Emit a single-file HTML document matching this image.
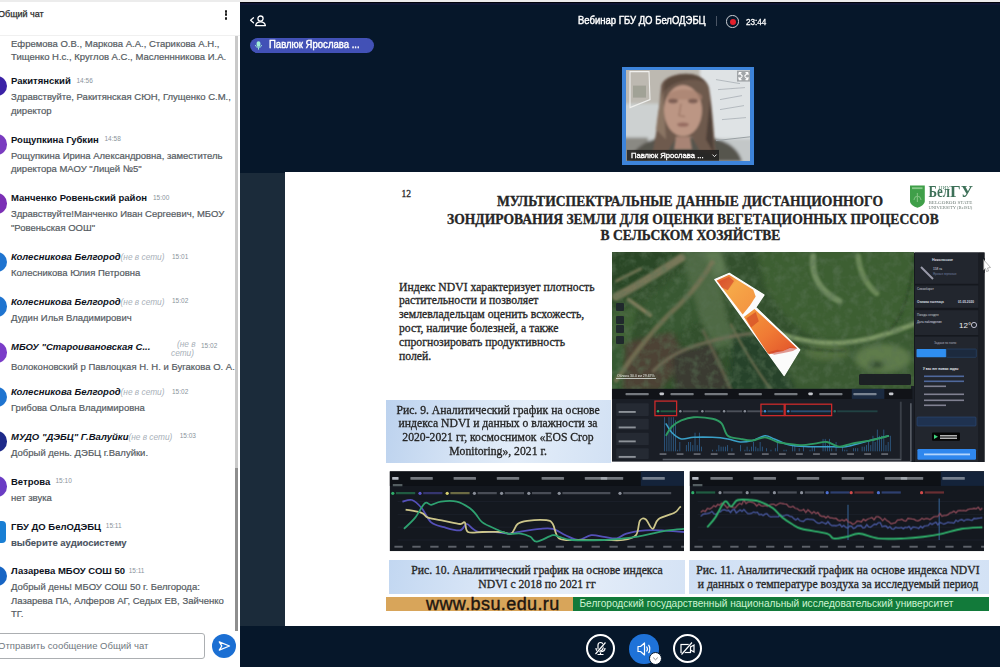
<!DOCTYPE html>
<html><head><meta charset="utf-8">
<style>
*{margin:0;padding:0;box-sizing:border-box}
html,body{width:1000px;height:667px;overflow:hidden;background:#06172a;font-family:"Liberation Sans",sans-serif;position:relative}
.a{position:absolute;white-space:nowrap}
#topbar{position:absolute;left:0;top:0;width:1000px;height:1.6px;background:#ececec}
#topline{position:absolute;left:240px;top:1.6px;width:760px;height:1.4px;background:#03040c}
#topline2{position:absolute;left:240px;top:3px;width:760px;height:2.4px;background:#0f1735}
#chat{position:absolute;left:0;top:2px;width:240px;height:665px;background:#fff}
.hdr{left:-2px;top:9px;font-size:9px;line-height:10px;color:#2b2b2b;-webkit-text-stroke:0.25px #2b2b2b}
.dots{left:224.5px;top:10px;width:2.8px}
.dots i{display:block;width:2.8px;height:2.8px;border-radius:50%;background:#1a1a1a;margin-bottom:0.7px}
.sep{left:0;top:35px;width:240px;height:1px;background:#f0f0f0}
.sb-track{left:235px;top:36px;width:3px;height:432px;background:#c9c9c9}
.sb-thumb{left:235px;top:468px;width:3px;height:163px;background:#8e8e8e}
.n{font-size:9.5px;line-height:11px;font-weight:bold;color:#0d121c;left:11px}
.n.i{font-style:italic}
.off{font-weight:normal;font-style:italic;color:#a9b1b9;font-size:8.3px;line-height:10px}
.t{font-size:6.5px;line-height:8px;color:#8a939c}
.m{font-size:9.5px;line-height:11px;color:#555b62;left:11px;-webkit-text-stroke:0.2px #555b62}
.m.b{font-weight:bold;color:#4a5360;-webkit-text-stroke:0.1px #4a5360}
.av{left:-14px;width:20.5px;height:20.5px;border-radius:50%}
.avs{left:-16px;width:22px;height:22px;border-radius:4px}
.inp{left:-4px;top:633px;width:209px;height:26px;border:1.4px solid #acafb2;border-radius:3px;background:#fff}
.ph{left:-2px;top:640px;font-size:9.5px;line-height:11px;color:#6f7780}
.send{left:212px;top:634px;width:24px;height:24px;border-radius:50%;background:#1b6fd3}
.ser{-webkit-text-stroke:0.3px #262626}
#main{position:absolute;left:240px;top:2px;width:760px;height:665px;background:#06172a}
</style></head><body>
<div id="topbar"></div>
<div id="chat"></div>
<div class="a hdr">Общий чат</div>
<div class="a dots"><i></i><i></i><i></i></div>
<div class="a sep"></div>
<div class="a sb-track"></div>
<div class="a sb-thumb"></div>
<div class="a m" style="top:38.1px">Ефремова О.В., Маркова А.А., Старикова А.Н.,</div>
<div class="a m" style="top:51.4px">Тищенко Н.с., Круглов А.С., Масленнникова И.А.</div>
<div class="a n" style="top:75.1px">Ракитянский</div>
<div class="a t" style="left:76.5px;top:76.7px">14:56</div>
<div class="a av" style="top:75.8px;background:#3b22a6"></div>
<div class="a m" style="top:91.1px">Здравствуйте, Ракитянская СЮН, Глущенко С.М.,</div>
<div class="a m" style="top:104.6px">директор</div>
<div class="a n" style="top:133.7px">Рощупкина Губкин</div>
<div class="a t" style="left:104.5px;top:135.3px">14:58</div>
<div class="a av" style="top:134.4px;background:#7a3cc0"></div>
<div class="a m" style="top:149.7px">Рощупкина Ирина Александровна, заместитель</div>
<div class="a m" style="top:163.2px">директора МАОУ "Лицей №5"</div>
<div class="a n" style="top:192.3px">Манченко Ровеньский район</div>
<div class="a t" style="left:153px;top:193.9px">15:00</div>
<div class="a av" style="top:193.0px;background:#7b2fb5"></div>
<div class="a m" style="top:208.3px">Здравствуйте!Манченко Иван Сергеевич, МБОУ</div>
<div class="a m" style="top:221.8px">"Ровеньская ООШ"</div>
<div class="a n i" style="top:250.9px">Колесникова Белгород<span class="off">(не в сети)</span></div>
<div class="a t" style="left:172px;top:252.5px">15:01</div>
<div class="a av" style="top:251.6px;background:#1f74d0"></div>
<div class="a m" style="top:266.9px">Колесникова Юлия Петровна</div>
<div class="a n i" style="top:295.5px">Колесникова Белгород<span class="off">(не в сети)</span></div>
<div class="a t" style="left:172px;top:297.1px">15:02</div>
<div class="a av" style="top:296.2px;background:#1f74d0"></div>
<div class="a m" style="top:311.5px">Дудин Илья Владимирович</div>
<div class="a n i" style="top:341.4px">МБОУ "Староивановская С...</div>
<div class="a off" style="left:177px;top:338.9px">(не в</div>
<div class="a off" style="left:171px;top:347.9px">сети)</div>
<div class="a t" style="left:201px;top:342.0px">15:02</div>
<div class="a av" style="top:342.1px;background:#7a3cc8"></div>
<div class="a m" style="top:361.2px">Волоконовский р Павлоцкая Н. Н. и Бугакова О. А.</div>
<div class="a n i" style="top:386.1px">Колесникова Белгород<span class="off">(не в сети)</span></div>
<div class="a t" style="left:172px;top:387.7px">15:02</div>
<div class="a av" style="top:386.8px;background:#1f74d0"></div>
<div class="a m" style="top:402.1px">Грибова Ольга Владимировна</div>
<div class="a n i" style="top:430.6px">МУДО "ДЭБЦ" Г.Валуйки<span class="off">(не в сети)</span></div>
<div class="a t" style="left:179.7px;top:432.2px">15:03</div>
<div class="a av" style="top:431.3px;background:#1e2a8a"></div>
<div class="a m" style="top:446.6px">Добрый день. ДЭБЦ г.Валуйки.</div>
<div class="a n" style="top:475.7px">Ветрова</div>
<div class="a t" style="left:55.5px;top:477.3px">15:10</div>
<div class="a av" style="top:476.4px;background:#6a3cc4"></div>
<div class="a m" style="top:491.7px">нет звука</div>
<div class="a n" style="top:520.8px">ГБУ ДО БелОДЭБЦ</div>
<div class="a t" style="left:105.8px;top:522.4px">15:11</div>
<div class="a avs" style="top:520.5px;background:#1a7fd4"></div>
<div class="a m b" style="top:536.8px">выберите аудиосистему</div>
<div class="a n" style="top:565.1px">Лазарева МБОУ СОШ 50</div>
<div class="a t" style="left:128.7px;top:566.7px">15:11</div>
<div class="a av" style="top:565.8px;background:#1765c4"></div>
<div class="a m" style="top:581.1px">Добрый день! МБОУ СОШ 50 г. Белгорода:</div>
<div class="a m" style="top:594.6px">Лазарева ПА, Алферов АГ, Седых ЕВ, Зайченко</div>
<div class="a m" style="top:608.1px">ТГ.</div>
<div class="a inp"></div>
<div class="a ph">Отправить сообщение Общий чат</div>
<div class="a send"><svg width="24" height="24" viewBox="0 0 24 24"><path d="M7.3 7.9 L17.5 12 L7.3 16.1 L9.8 12 Z" fill="none" stroke="#fff" stroke-width="1.3" stroke-linejoin="round"/></svg></div>
<div id="main"></div>
<div id="topline"></div><div id="topline2"></div>
<!-- header -->
<svg class="a" style="left:248px;top:13px" width="20" height="16" viewBox="0 0 20 16">
 <path d="M5.5 4.8 L2.6 7.3 L5.5 9.8" fill="none" stroke="#fff" stroke-width="1.3" stroke-linecap="round" stroke-linejoin="round"/>
 <circle cx="12.5" cy="5.6" r="2.6" fill="none" stroke="#fff" stroke-width="1.3"/>
 <path d="M7.6 12.6 C8.2 9.9 10.2 8.9 12.5 8.9 C14.8 8.9 16.8 9.9 17.4 12.6 Z" fill="none" stroke="#fff" stroke-width="1.3" stroke-linejoin="round"/>
</svg>
<div class="a" style="left:577.5px;top:14.2px;font-size:11px;line-height:13px;color:#fff;-webkit-text-stroke:0.45px #fff;transform:scaleX(0.865);transform-origin:0 0">Вебинар ГБУ ДО БелОДЭБЦ</div>
<div class="a" style="left:715.5px;top:16px;width:1px;height:10px;background:#4a5565"></div>
<div class="a" style="left:726.3px;top:15.3px;width:12.4px;height:12.4px;border-radius:50%;border:1.2px solid #c9cdd3;background:#06172a"></div>
<div class="a" style="left:729.5px;top:18.5px;width:6px;height:6px;border-radius:50%;background:#e3202c"></div>
<div class="a" style="left:746px;top:15.8px;font-size:9.4px;line-height:11px;color:#fff;-webkit-text-stroke:0.3px #fff;transform:scaleX(0.87);transform-origin:0 0">23:44</div>
<!-- talking pill -->
<div class="a" style="left:250px;top:38px;width:124px;height:15px;border-radius:8px;background:#4251b6"></div>
<svg class="a" style="left:254px;top:40px" width="9" height="11" viewBox="0 0 9 11">
 <rect x="2.6" y="1.2" width="3.8" height="5.6" rx="1.9" fill="#9ff0d6"/>
 <path d="M1.4 5.2 C1.4 8 7.6 8 7.6 5.2" fill="none" stroke="#9ff0d6" stroke-width="1"/>
 <rect x="4" y="7.6" width="1" height="2" fill="#9ff0d6"/>
</svg>
<div class="a" style="left:268.5px;top:39.2px;font-size:10px;line-height:12px;color:#fff;-webkit-text-stroke:0.4px #fff;transform:scaleX(0.955);transform-origin:0 0">Павлюк Ярослава ...</div>
<div class="a" style="left:621.8px;top:66.6px;width:132px;height:98.6px;background:#3d84da"></div>
<svg class="a" style="left:626px;top:70.4px" width="124.3" height="90.6" viewBox="626 70.4 124.3 90.6">
 <defs><filter id="vb" x="-10%" y="-10%" width="120%" height="120%"><feGaussianBlur stdDeviation="1.5"/></filter>
 <filter id="vb1" x="-20%" y="-20%" width="140%" height="140%"><feGaussianBlur stdDeviation="0.9"/></filter>
 <filter id="vb2"><feGaussianBlur stdDeviation="0.45"/></filter></defs>
 <rect x="626" y="70.4" width="124.3" height="90.6" fill="#c9c9c6"/>
 <g filter="url(#vb)">
  <rect x="620" y="65" width="90" height="42" fill="#bdb9b1"/>
  <rect x="620" y="104" width="52" height="60" fill="#cdd1d1"/>
  <rect x="700" y="65" width="55" height="76" fill="#dfe3e5"/>
  <rect x="700" y="139" width="55" height="25" fill="#c3c7c8"/>
  <rect x="620" y="138" width="28" height="25" fill="#8a8983"/>
  <path d="M630 162 C634 145 652 139 668 137 L702 137 C724 139 738 147 742 162 Z" fill="#57544e"/>
 </g>
 <g filter="url(#vb1)">
  <path d="M661 88 C661 72 704 68 709 88 C713 112 714 138 716 156 L700 152 L692 138 L676 138 L668 152 L652 156 C656 138 659 112 661 88 Z" fill="#6e5a4d"/>
  <path d="M664 84 C670 72 700 70 706 84 C700 78 676 78 664 92 Z" fill="#5a483e"/>
  <path d="M656 130 C658 112 660 100 663 92 L666 140 Z" fill="#8a7464"/>
  <path d="M710 100 C712 120 713 140 714 154 L706 140 Z" fill="#4e3f37"/>
  <ellipse cx="683" cy="111" rx="19" ry="25.5" fill="#bc9684"/>
  <path d="M668 95 C676 88 694 88 702 96 L702 100 L668 100 Z" fill="#a88270" opacity="0.7"/>
  <ellipse cx="673" cy="101.5" rx="5" ry="2.4" fill="#6e5048" opacity="0.8"/>
  <ellipse cx="693" cy="101.5" rx="5" ry="2.4" fill="#6e5048" opacity="0.8"/>
  <path d="M681 104 L679 116 L685 117" stroke="#9a7464" stroke-width="1.2" fill="none"/>
  <ellipse cx="683" cy="125" rx="6" ry="2.2" fill="#8a5e56" opacity="0.75"/>
  <path d="M676 137 L690 137 L692 150 L674 150 Z" fill="#a88474"/>
 </g>
 <g filter="url(#vb2)">
  <path d="M630 72 L649 72 L650 100 L630 108 Z" fill="none" stroke="#f0f0ee" stroke-width="1.1"/>
  <rect x="633" y="86" width="13" height="12" fill="#8a8e80" opacity="0.55"/>
  <path d="M716 80 L740 84 M718 90 L745 88 M720 100 L742 96 M720 110 L744 106 M722 120 L746 118" stroke="#5a6470" stroke-width="0.6" opacity="0.55"/>
  <path d="M716 141 L752 137" stroke="#9aa0a4" stroke-width="1"/>
 </g>
 <rect x="737" y="71" width="13" height="11" fill="#8e9294" opacity="0.75"/>
 <path d="M739 73 L742.5 76.5 M739 73 H741.5 M739 73 V75.5 M748 73 L744.5 76.5 M748 73 H745.5 M748 73 V75.5 M739 80 L742.5 76.5 M739 80 H741.5 M739 80 V77.5 M748 80 L744.5 76.5 M748 80 H745.5 M748 80 V77.5" stroke="#fff" stroke-width="1.1"/>
 <rect x="627" y="150.3" width="92" height="10.8" fill="#1d1d1d" opacity="0.82"/>
 <path d="M712.5 155 L714.5 157 L716.5 155" stroke="#fff" stroke-width="0.9" fill="none"/>
</svg>
<div class="a" style="left:631px;top:150.6px;font-size:8px;line-height:10px;color:#fff;-webkit-text-stroke:0.35px #fff;transform:scaleX(0.955);transform-origin:0 0">Павлюк Ярослава ...</div>

<!-- presentation band -->
<div class="a" style="left:240px;top:173px;width:45px;height:453px;background:#1b2b3a"></div>
<div class="a" style="left:285px;top:172px;width:715px;height:454px;background:#fff"></div>
<svg class="a" style="left:0;top:0" width="1000" height="667" viewBox="0 0 1000 667">
<defs>
<filter id="bl1" x="-20%" y="-20%" width="140%" height="140%"><feGaussianBlur stdDeviation="1.2"/></filter>
<filter id="bl2" x="-20%" y="-20%" width="140%" height="140%"><feGaussianBlur stdDeviation="2.5"/></filter>
<filter id="blz" x="-20%" y="-20%" width="140%" height="140%"><feGaussianBlur stdDeviation="9"/></filter>
<filter id="blz2" x="-20%" y="-20%" width="140%" height="140%"><feGaussianBlur stdDeviation="4"/></filter>
<filter id="noise" x="0" y="0" width="100%" height="100%"><feTurbulence type="fractalNoise" baseFrequency="0.12" numOctaves="3" seed="4"/><feColorMatrix type="matrix" values="0 0 0 0 0.1  0 0 0 0 0.17  0 0 0 0 0.09  0 0 0 2.2 -0.9"/></filter>
<filter id="bl05"><feGaussianBlur stdDeviation="0.5"/></filter>
<clipPath id="mapclip"><rect x="612" y="252" width="302" height="137"/></clipPath>
<clipPath id="c1clip"><rect x="389" y="471" width="296" height="81"/></clipPath>
<clipPath id="c2clip"><rect x="688" y="471" width="296" height="81"/></clipPath>
<clipPath id="c3clip"><rect x="612" y="389" width="302" height="73"/></clipPath>
<linearGradient id="fieldg" x1="0" y1="0" x2="1" y2="1">
 <stop offset="0" stop-color="#c8281c"/><stop offset="0.3" stop-color="#f0802a"/><stop offset="0.6" stop-color="#e9622a"/><stop offset="1" stop-color="#d8401f"/>
</linearGradient>
<linearGradient id="fieldg2" x1="0" y1="0" x2="1" y2="1">
 <stop offset="0" stop-color="#e25a28"/><stop offset="0.35" stop-color="#f6a848"/><stop offset="1" stop-color="#f39040"/>
</linearGradient>
<linearGradient id="fieldg3" x1="0" y1="0" x2="1" y2="1">
 <stop offset="0" stop-color="#f49a3c"/><stop offset="0.5" stop-color="#f07a34"/><stop offset="1" stop-color="#e0502a"/>
</linearGradient>
</defs>
<g clip-path="url(#mapclip)">
<rect x="612" y="252" width="302" height="137" fill="#33502d"/>
<g transform="translate(610,250) scale(0.31)">
<g filter="url(#blz)">
<path d="M470 0 H1000 V260 C900 270 800 290 700 290 C620 280 560 220 500 120 Z" fill="#3d5e33"/>
<path d="M0 0 H200 L70 150 L0 130 Z" fill="#2a4727"/>
<path d="M100 175 L245 60 L310 220 L160 300 Z" fill="#385832"/>
<path d="M230 0 L330 0 L360 120 L380 230 L420 300 L340 320 L300 240 L260 120 Z" fill="#4f6a44"/>
<path d="M300 0 L360 0 L380 80 L340 90 Z" fill="#5f7a52"/>
<path d="M40 300 L200 265 L245 350 L160 452 L40 452 Z" fill="#4d4235"/>
<path d="M210 370 L330 320 L390 452 L230 452 Z" fill="#4a493d"/>
<path d="M0 200 L90 180 L60 300 L0 320 Z" fill="#3f6236"/>
<path d="M0 320 L50 310 L40 452 L0 452 Z" fill="#365a30"/>
<path d="M580 300 L1000 260 V452 H560 Z" fill="#3a5a31"/>
<ellipse cx="880" cy="350" rx="90" ry="45" fill="#5f7c4c"/>
<ellipse cx="700" cy="330" rx="70" ry="25" fill="#53703f"/>
<ellipse cx="860" cy="370" rx="25" ry="10" fill="#26402a"/>
<path d="M400 260 L520 300 L600 452 L380 452 Z" fill="#27422a"/>
<path d="M200 330 L330 300 L390 452 L210 452 Z" fill="#3a3a30"/>
</g>
<g filter="url(#blz2)" fill="none" stroke-linecap="round">
<path d="M20 420 C60 360 140 250 230 170 C260 140 300 90 330 40" stroke="#7a7658" stroke-width="16" opacity="0.8"/>
<path d="M20 150 C80 120 160 70 230 25" stroke="#857f60" stroke-width="26" opacity="0.85"/>
<path d="M60 160 L130 210" stroke="#86805f" stroke-width="12"/>
<path d="M20 100 L100 60" stroke="#7d7a5a" stroke-width="8"/>
<path d="M140 390 C200 330 260 310 340 290 C400 275 440 270 480 268" stroke="#77715a" stroke-width="12" opacity="0.8"/>
<path d="M300 260 C330 320 360 380 390 452" stroke="#6f6a52" stroke-width="10" opacity="0.7"/>
<path d="M390 240 C420 300 460 370 520 452" stroke="#6f7052" stroke-width="7"/>
<path d="M655 20 C650 80 670 130 740 165" stroke="#7a9468" stroke-width="20" opacity="0.85"/>
<path d="M800 20 C805 70 825 110 860 140" stroke="#74905f" stroke-width="18" opacity="0.85"/>
<path d="M470 240 C540 270 620 300 720 300 C820 300 900 270 990 235" stroke="#7c9665" stroke-width="16"/>
<path d="M480 265 C560 300 640 330 760 325" stroke="#2a4426" stroke-width="5"/>
<path d="M980 20 C975 120 940 230 900 260" stroke="#2a4426" stroke-width="5"/>
</g>
</g>
<rect x="612" y="252" width="302" height="137" filter="url(#noise)" opacity="0.55"/>
<g transform="translate(610,250) scale(0.31)">
<path d="M338 95 L385 75 L497 145 L470 185 L612 322 L562 405 Z" fill="#fbfbfb" stroke="#fff" stroke-width="4" stroke-linejoin="round"/>
<path d="M344 98 L384 80 L462 128 L470 150 L452 178 L428 208 Z" fill="url(#fieldg2)"/>
<path d="M432 216 L466 190 L540 258 L604 318 L580 316 L560 326 L536 330 L514 336 L508 332 Z" fill="url(#fieldg3)"/>
<path d="M350 102 L384 86 L400 100 L380 130 L360 120 Z" fill="#d0402a" opacity="0.6"/>
<path d="M510 330 L540 322 L560 326 L580 314 L604 318 L590 326 L560 332 L530 338 Z" fill="#c8382a" opacity="0.5"/>
<path d="M440 220 L470 200 L480 230 L455 250 Z" fill="#c8321e" opacity="0.5"/>
</g>
<rect x="616" y="303" width="8" height="8" rx="1" fill="#1d232b" opacity="0.9"/>
<rect x="616" y="316" width="8" height="8" rx="1" fill="#1d232b" opacity="0.9"/>
<rect x="616" y="325" width="8" height="8" rx="1" fill="#1d232b" opacity="0.9"/>
<rect x="616" y="336" width="8" height="8" rx="1" fill="#1d232b" opacity="0.9"/>
<rect x="859" y="374" width="52" height="11" rx="1.5" fill="#1a1e24" opacity="0.95"/>
<rect x="616" y="378" width="40" height="1" fill="#dfe3e0" opacity="0.8"/>
<text x="617" y="377" font-family="Liberation Sans" font-size="3.5" fill="#e8ece8">Облака      30.0 км 29.67%</text>
</g>
<rect x="911" y="386" width="4" height="76" fill="#1a1e26"/>
<rect x="914" y="252.5" width="70.5" height="209.5" fill="#15181e"/>
<rect x="915" y="252.5" width="63.5" height="31.30000000000001" fill="#22262e"/>
<rect x="915" y="285.5" width="63.5" height="22.30000000000001" fill="#22262e"/>
<rect x="915" y="310.2" width="63.5" height="24.80000000000001" fill="#22262e"/>
<rect x="915" y="336.6" width="63.5" height="125.39999999999998" fill="#22262e"/>
<rect x="978.5" y="252.5" width="6" height="209.5" fill="#1a1d23"/>
<path d="M921 267 L933 279" stroke="#ccd" stroke-width="2" opacity="0.7"/>
<text x="932" y="261" font-family="Liberation Sans" font-size="3.6" font-weight="bold" fill="#d6dae0">Никольское</text>
<text x="933" y="270" font-family="Liberation Sans" font-size="3.2" fill="#d6dae0">158 га</text>
<text x="933" y="275" font-family="Liberation Sans" font-size="2.8" fill="#6f7fa0">Яровые зерновые</text>
<text x="917" y="290" font-family="Liberation Sans" font-size="3" fill="#c9ced6">Севооборот</text>
<text x="917" y="303" font-family="Liberation Sans" font-size="3.2" font-weight="bold" fill="#d6dae0">Озимая пшеница</text>
<text x="958" y="303" font-family="Liberation Sans" font-size="3.2" font-weight="bold" fill="#d6dae0">01.05.2020</text>
<text x="917" y="316" font-family="Liberation Sans" font-size="3" fill="#c9ced6">Погода сегодня</text>
<text x="917" y="323" font-family="Liberation Sans" font-size="3" fill="#d6dae0">Дата наблюдения</text>
<text x="959" y="328" font-family="Liberation Sans" font-size="8" fill="#eef0f3">12°</text>
<circle cx="974" cy="325" r="2.6" fill="none" stroke="#ccd" stroke-width="0.9"/>
<text x="934" y="344" font-family="Liberation Sans" font-size="3" fill="#aab">Задачи по полю</text>
<rect x="916.5" y="349" width="29.8" height="8.3" rx="0.8" fill="#2f8ef0"/>
<rect x="946.3" y="349" width="30" height="8.3" rx="0.8" fill="#1c2a3e" stroke="#2b4f7c" stroke-width="0.5"/>
<text x="923" y="370" font-family="Liberation Sans" font-size="3.2" font-weight="bold" fill="#e6e9ee">У вас нет новых задач</text>
<rect x="924" y="375.5" width="40" height="1.6" fill="#5b79b8" opacity="0.8"/>
<rect x="924" y="380.5" width="40" height="1.6" fill="#5b79b8" opacity="0.8"/>
<rect x="924" y="385.5" width="22" height="1.6" fill="#99a" opacity="0.8"/>
<rect x="924" y="393.5" width="40" height="1.6" fill="#99a" opacity="0.8"/>
<rect x="924" y="399.5" width="40" height="1.6" fill="#99a" opacity="0.8"/>
<rect x="924" y="404.5" width="22" height="1.6" fill="#99a" opacity="0.8"/>
<rect x="917" y="417" width="59" height="9" rx="1" fill="#1f3250" stroke="#2d4c78" stroke-width="0.6"/>
<rect x="932" y="432.6" width="28" height="8.2" rx="1" fill="#050505"/>
<path d="M934 434.5 L938 436.7 L934 438.9 Z" fill="#3fd67f"/>
<rect x="940" y="435" width="17" height="1.5" fill="#ddd" opacity="0.8"/><rect x="940" y="437.5" width="17" height="1.5" fill="#ddd" opacity="0.8"/>
<rect x="917.4" y="449" width="58.6" height="10.8" rx="1.2" fill="#2f87ee"/>
<rect x="924" y="453.5" width="46" height="1.8" fill="#d6e8ff" opacity="0.8"/>
<g transform="translate(380,460) scale(0.32)" clip-path="url(#c1z)">
<clipPath id="c1z"><rect x="30" y="35" width="920" height="250"/></clipPath>
<rect x="30" y="35" width="920" height="250" fill="#14181f"/>
<rect x="30" y="35" width="920" height="46" fill="#0e1116"/>
<rect x="815" y="35" width="135" height="46" fill="#14233a"/>
<rect x="38" y="53" width="20" height="9" rx="2" fill="#c9ced6" opacity="0.9"/>
<rect x="95" y="53" width="70" height="9" rx="2" fill="#c9ced6" opacity="0.55"/>
<rect x="230" y="53" width="70" height="9" rx="2" fill="#c9ced6" opacity="0.55"/>
<rect x="365" y="53" width="70" height="9" rx="2" fill="#c9ced6" opacity="0.55"/>
<rect x="505" y="53" width="70" height="9" rx="2" fill="#c9ced6" opacity="0.55"/>
<rect x="640" y="53" width="70" height="9" rx="2" fill="#c9ced6" opacity="0.55"/>
<rect x="690" y="53" width="70" height="9" rx="2" fill="#c9ced6" opacity="0.55"/>
<rect x="820" y="53" width="70" height="9" rx="2" fill="#c9ced6" opacity="0.55"/>
<rect x="40" y="75" width="30" height="7" fill="#9aa" opacity="0.5"/>
<line x1="55" y1="130" x2="950" y2="130" stroke="#1f2430" stroke-width="2"/>
<line x1="55" y1="170" x2="950" y2="170" stroke="#1f2430" stroke-width="2"/>
<line x1="55" y1="210" x2="950" y2="210" stroke="#1f2430" stroke-width="2"/>
<line x1="55" y1="250" x2="950" y2="250" stroke="#1f2430" stroke-width="2"/>
<rect x="45" y="268" width="26" height="6" fill="#b5bac4" opacity="0.45"/>
<rect x="101" y="268" width="26" height="6" fill="#b5bac4" opacity="0.45"/>
<rect x="157" y="268" width="26" height="6" fill="#b5bac4" opacity="0.45"/>
<rect x="213" y="268" width="26" height="6" fill="#b5bac4" opacity="0.45"/>
<rect x="269" y="268" width="26" height="6" fill="#b5bac4" opacity="0.45"/>
<rect x="325" y="268" width="26" height="6" fill="#b5bac4" opacity="0.45"/>
<rect x="381" y="268" width="26" height="6" fill="#b5bac4" opacity="0.45"/>
<rect x="437" y="268" width="26" height="6" fill="#b5bac4" opacity="0.45"/>
<rect x="493" y="268" width="26" height="6" fill="#b5bac4" opacity="0.45"/>
<rect x="549" y="268" width="26" height="6" fill="#b5bac4" opacity="0.45"/>
<rect x="605" y="268" width="26" height="6" fill="#b5bac4" opacity="0.45"/>
<rect x="661" y="268" width="26" height="6" fill="#b5bac4" opacity="0.45"/>
<rect x="717" y="268" width="26" height="6" fill="#b5bac4" opacity="0.45"/>
<rect x="773" y="268" width="26" height="6" fill="#b5bac4" opacity="0.45"/>
<rect x="829" y="268" width="26" height="6" fill="#b5bac4" opacity="0.45"/>
<rect x="885" y="268" width="26" height="6" fill="#b5bac4" opacity="0.45"/>
<rect x="941" y="268" width="26" height="6" fill="#b5bac4" opacity="0.45"/>
<circle cx="40" cy="104" r="5" fill="#2fae6a"/><rect x="50" y="100" width="60" height="7" fill="#2fae6a" opacity="0.45"/>
<circle cx="125" cy="104" r="5" fill="#5d58d0"/><rect x="135" y="100" width="60" height="7" fill="#5d58d0" opacity="0.45"/>
<circle cx="210" cy="104" r="5" fill="#d8d070"/><rect x="220" y="100" width="60" height="7" fill="#d8d070" opacity="0.45"/>
<circle cx="295" cy="104" r="5" fill="#8a8f99"/><rect x="305" y="100" width="60" height="7" fill="#8a8f99" opacity="0.45"/>
<circle cx="380" cy="104" r="5" fill="#8a8f99"/><rect x="390" y="100" width="60" height="7" fill="#8a8f99" opacity="0.45"/>
<circle cx="465" cy="104" r="5" fill="#8a8f99"/><rect x="475" y="100" width="60" height="7" fill="#8a8f99" opacity="0.45"/>
<circle cx="560" cy="104" r="5" fill="#8a8f99"/><rect x="570" y="100" width="150" height="7" fill="#8a8f99" opacity="0.45"/>
<circle cx="750" cy="104" r="5" fill="#8a8f99"/><rect x="760" y="100" width="150" height="7" fill="#8a8f99" opacity="0.45"/>
<path d="M70,130 C75.0,129.2 90.0,121.7 100,125 C110.0,128.3 120.0,138.3 130,150 C140.0,161.7 148.3,185.0 160,195 C171.7,205.0 185.0,205.8 200,210 C215.0,214.2 238.3,221.7 250,220 C261.7,218.3 263.3,200.8 270,200 C276.7,199.2 283.3,210.8 290,215 C296.7,219.2 298.3,223.3 310,225 C321.7,226.7 345.0,224.2 360,225 C375.0,225.8 388.3,230.0 400,230 C411.7,230.0 413.3,227.5 430,225 C446.7,222.5 481.7,216.7 500,215 C518.3,213.3 526.7,211.7 540,215 C553.3,218.3 566.7,229.2 580,235 C593.3,240.8 606.7,250.0 620,250 C633.3,250.0 646.7,236.7 660,235 C673.3,233.3 686.7,238.3 700,240 C713.3,241.7 728.3,246.7 740,245 C751.7,243.3 755.0,234.2 770,230 C785.0,225.8 811.7,221.7 830,220 C848.3,218.3 860.0,219.2 880,220 C900.0,220.8 938.3,224.2 950,225" fill="none" stroke="#5450b8" stroke-width="5.5"/>
<path d="M80,155 C88.3,156.7 118.3,160.8 130,165 C141.7,169.2 138.3,175.8 150,180 C161.7,184.2 183.3,186.7 200,190 C216.7,193.3 239.2,199.2 250,200 C260.8,200.8 260.8,190.8 265,195 C269.2,199.2 265.8,220.0 275,225 C284.2,230.0 302.5,225.0 320,225 C337.5,225.0 365.0,224.2 380,225 C395.0,225.8 401.7,234.2 410,230 C418.3,225.8 421.7,206.7 430,200 C438.3,193.3 445.0,192.0 460,190 C475.0,188.0 506.7,186.3 520,188 C533.3,189.7 533.3,190.5 540,200 C546.7,209.5 546.7,236.7 560,245 C573.3,253.3 596.7,249.2 620,250 C643.3,250.8 676.7,250.0 700,250 C723.3,250.0 743.3,252.5 760,250 C776.7,247.5 791.3,245.0 800,235 C808.7,225.0 807.0,198.3 812,190 C817.0,181.7 823.3,180.8 830,185 C836.7,189.2 845.3,215.0 852,215 C858.7,215.0 858.7,193.3 870,185 C881.3,176.7 909.2,170.8 920,165 C930.8,159.2 931.7,153.3 935,150 C938.3,146.7 939.2,145.8 940,145" fill="none" stroke="#cdc68a" stroke-width="5.5"/>
<path d="M75,215 C80.8,209.2 99.2,193.3 110,180 C120.8,166.7 131.7,141.7 140,135 C148.3,128.3 151.7,140.8 160,140 C168.3,139.2 176.7,131.7 190,130 C203.3,128.3 225.0,126.7 240,130 C255.0,133.3 270.0,143.3 280,150 C290.0,156.7 293.3,162.5 300,170 C306.7,177.5 310.0,187.5 320,195 C330.0,202.5 346.7,209.2 360,215 C373.3,220.8 386.7,227.5 400,230 C413.3,232.5 428.3,228.3 440,230 C451.7,231.7 461.7,235.8 470,240 C478.3,244.2 478.3,255.8 490,255 C501.7,254.2 528.3,237.5 540,235 C551.7,232.5 550.0,237.5 560,240 C570.0,242.5 576.7,248.3 600,250 C623.3,251.7 673.3,250.8 700,250 C726.7,249.2 743.3,246.7 760,245 C776.7,243.3 785.0,242.5 800,240 C815.0,237.5 833.3,233.3 850,230 C866.7,226.7 883.3,222.5 900,220 C916.7,217.5 941.7,215.8 950,215" fill="none" stroke="#2ea170" stroke-width="5.5"/>
</g>
<g transform="translate(680,460) scale(0.32)">
<clipPath id="c2z"><rect x="30" y="35" width="920" height="250"/></clipPath>
<g clip-path="url(#c2z)">
<rect x="30" y="35" width="920" height="250" fill="#14181f"/>
<rect x="30" y="35" width="920" height="46" fill="#0e1116"/>
<rect x="815" y="35" width="135" height="46" fill="#14233a"/>
<rect x="38" y="53" width="20" height="9" rx="2" fill="#c9ced6" opacity="0.9"/>
<rect x="95" y="53" width="70" height="9" rx="2" fill="#c9ced6" opacity="0.55"/>
<rect x="230" y="53" width="70" height="9" rx="2" fill="#c9ced6" opacity="0.55"/>
<rect x="365" y="53" width="70" height="9" rx="2" fill="#c9ced6" opacity="0.55"/>
<rect x="505" y="53" width="70" height="9" rx="2" fill="#c9ced6" opacity="0.55"/>
<rect x="640" y="53" width="70" height="9" rx="2" fill="#c9ced6" opacity="0.55"/>
<rect x="690" y="53" width="70" height="9" rx="2" fill="#c9ced6" opacity="0.55"/>
<rect x="820" y="53" width="70" height="9" rx="2" fill="#c9ced6" opacity="0.55"/>
<rect x="40" y="75" width="30" height="7" fill="#9aa" opacity="0.5"/>
<line x1="55" y1="130" x2="950" y2="130" stroke="#1f2430" stroke-width="2"/>
<line x1="55" y1="170" x2="950" y2="170" stroke="#1f2430" stroke-width="2"/>
<line x1="55" y1="210" x2="950" y2="210" stroke="#1f2430" stroke-width="2"/>
<line x1="55" y1="250" x2="950" y2="250" stroke="#1f2430" stroke-width="2"/>
<rect x="45" y="268" width="26" height="6" fill="#b5bac4" opacity="0.45"/>
<rect x="101" y="268" width="26" height="6" fill="#b5bac4" opacity="0.45"/>
<rect x="157" y="268" width="26" height="6" fill="#b5bac4" opacity="0.45"/>
<rect x="213" y="268" width="26" height="6" fill="#b5bac4" opacity="0.45"/>
<rect x="269" y="268" width="26" height="6" fill="#b5bac4" opacity="0.45"/>
<rect x="325" y="268" width="26" height="6" fill="#b5bac4" opacity="0.45"/>
<rect x="381" y="268" width="26" height="6" fill="#b5bac4" opacity="0.45"/>
<rect x="437" y="268" width="26" height="6" fill="#b5bac4" opacity="0.45"/>
<rect x="493" y="268" width="26" height="6" fill="#b5bac4" opacity="0.45"/>
<rect x="549" y="268" width="26" height="6" fill="#b5bac4" opacity="0.45"/>
<rect x="605" y="268" width="26" height="6" fill="#b5bac4" opacity="0.45"/>
<rect x="661" y="268" width="26" height="6" fill="#b5bac4" opacity="0.45"/>
<rect x="717" y="268" width="26" height="6" fill="#b5bac4" opacity="0.45"/>
<rect x="773" y="268" width="26" height="6" fill="#b5bac4" opacity="0.45"/>
<rect x="829" y="268" width="26" height="6" fill="#b5bac4" opacity="0.45"/>
<rect x="885" y="268" width="26" height="6" fill="#b5bac4" opacity="0.45"/>
<rect x="941" y="268" width="26" height="6" fill="#b5bac4" opacity="0.45"/>
<circle cx="40" cy="102" r="5" fill="#2fae6a"/><rect x="50" y="98" width="60" height="7" fill="#2fae6a" opacity="0.45"/>
<circle cx="125" cy="102" r="5" fill="#8a8f99"/><rect x="135" y="98" width="60" height="7" fill="#8a8f99" opacity="0.45"/>
<circle cx="210" cy="102" r="5" fill="#8a8f99"/><rect x="220" y="98" width="60" height="7" fill="#8a8f99" opacity="0.45"/>
<circle cx="295" cy="102" r="5" fill="#8a8f99"/><rect x="305" y="98" width="60" height="7" fill="#8a8f99" opacity="0.45"/>
<circle cx="380" cy="102" r="5" fill="#8a8f99"/><rect x="390" y="98" width="60" height="7" fill="#8a8f99" opacity="0.45"/>
<circle cx="460" cy="102" r="5" fill="#4d6fd0"/><rect x="470" y="98" width="60" height="7" fill="#4d6fd0" opacity="0.45"/>
<circle cx="535" cy="102" r="5" fill="#d04a4a"/><rect x="545" y="98" width="60" height="7" fill="#d04a4a" opacity="0.45"/>
<circle cx="620" cy="102" r="5" fill="#4d6fd0"/><rect x="630" y="98" width="60" height="7" fill="#4d6fd0" opacity="0.45"/>
<circle cx="755" cy="102" r="5" fill="#d04a4a"/><rect x="765" y="98" width="60" height="7" fill="#d04a4a" opacity="0.45"/>
<line x1="525" y1="140" x2="525" y2="250" stroke="#3b6fa8" stroke-width="4" opacity="0.7"/>
<line x1="810" y1="120" x2="810" y2="250" stroke="#3b6fa8" stroke-width="4" opacity="0.7"/>
<path d="M65.0,162.9 L72.0,157.8 L79.0,160.8 L86.0,150.9 L93.0,153.4 L100.0,148.4 L106.0,142.7 L112.0,146.1 L118.0,138.4 L124.0,141.2 L130.0,134.8 L136.0,137.1 L142.0,143.1 L148.0,149.9 L154.0,143.5 L160.0,146.7 L166.7,148.2 L173.3,148.7 L180.0,140.9 L186.7,135.4 L193.3,139.0 L200.0,124.6 L206.7,136.0 L213.3,130.8 L220.0,130.7 L226.7,132.1 L233.3,136.0 L240.0,143.8 L246.7,137.0 L253.3,142.6 L260.0,144.2 L266.7,141.8 L273.3,144.7 L280.0,139.8 L286.7,138.0 L293.3,138.1 L300.0,142.2 L306.7,137.5 L313.3,134.4 L320.0,136.0 L326.7,136.9 L333.3,137.6 L340.0,146.0 L346.7,147.4 L353.3,144.4 L360.0,150.9 L366.7,152.0 L373.3,157.8 L380.0,157.8 L386.7,154.1 L393.3,164.1 L400.0,155.4 L406.2,160.9 L412.5,166.8 L418.8,161.4 L425.0,167.4 L431.2,163.8 L437.5,173.3 L443.8,176.3 L450.0,175.9 L456.2,180.8 L462.5,175.3 L468.8,181.1 L475.0,181.1 L481.2,182.2 L487.5,182.0 L493.8,187.8 L500.0,190.3 L506.7,186.4 L513.3,190.3 L520.0,184.7 L526.7,194.1 L533.3,195.1 L540.0,200.9 L546.7,198.0 L553.3,190.7 L560.0,191.1 L566.7,193.7 L573.3,185.1 L580.0,189.5 L586.7,184.3 L593.3,182.1 L600.0,179.7 L606.7,186.6 L613.3,177.2 L620.0,177.0 L626.7,181.2 L633.3,189.5 L640.0,182.5 L646.7,189.4 L653.3,193.1 L660.0,199.6 L666.7,197.2 L673.3,196.0 L680.0,187.3 L686.7,187.3 L693.3,185.0 L700.0,189.6 L706.2,191.1 L712.5,182.1 L718.8,183.0 L725.0,184.3 L731.2,184.9 L737.5,188.6 L743.8,190.4 L750.0,187.2 L756.2,182.2 L762.5,185.3 L768.8,182.8 L775.0,183.3 L781.2,186.1 L787.5,181.0 L793.8,177.1 L800.0,176.4 L806.2,175.9 L812.5,167.1 L818.8,176.0 L825.0,173.4 L831.2,173.2 L837.5,171.1 L843.8,165.0 L850.0,163.8 L856.2,159.6 L862.5,165.4 L868.8,157.9 L875.0,157.3 L881.2,158.4 L887.5,157.2 L893.8,158.7 L900.0,154.6 L906.4,152.6 L912.9,153.0 L919.3,150.9 L925.7,152.6 L932.1,147.2 L938.6,155.9 L945,150" fill="none" stroke="#8e4a58" stroke-width="4"/>
<path d="M65.0,176.4 L72.0,168.8 L79.0,168.0 L86.0,167.2 L93.0,165.4 L100.0,160.5 L106.7,168.4 L113.3,169.3 L120.0,162.1 L126.7,161.5 L133.3,155.9 L140.0,155.2 L146.0,158.1 L152.0,157.2 L158.0,163.9 L164.0,155.9 L170.0,154.3 L176.0,165.4 L182.0,160.3 L188.0,155.8 L194.0,160.5 L200.0,154.3 L206.0,161.3 L212.0,167.7 L218.0,167.4 L224.0,166.4 L230.0,162.1 L236.0,164.4 L242.0,163.0 L248.0,171.3 L254.0,169.4 L260.0,173.3 L266.0,168.5 L272.0,167.7 L278.0,175.2 L284.0,177.8 L290.0,176.7 L296.0,176.7 L302.0,177.3 L308.0,176.9 L314.0,171.2 L320.0,175.2 L326.0,174.3 L332.0,171.3 L338.0,172.3 L344.0,176.4 L350.0,177.1 L356.0,183.3 L362.0,187.5 L368.0,182.4 L374.0,189.2 L380.0,190.9 L386.4,191.4 L392.7,185.2 L399.1,184.4 L405.5,185.4 L411.8,185.9 L418.2,186.9 L424.5,192.9 L430.9,197.1 L437.3,197.3 L443.6,193.8 L450.0,196.8 L456.2,199.8 L462.5,192.5 L468.8,200.7 L475.0,204.9 L481.2,204.6 L487.5,205.5 L493.8,203.5 L500.0,201.1 L506.0,209.0 L512.0,204.0 L518.0,210.1 L524.0,212.7 L530.0,206.3 L536.0,206.8 L542.0,213.9 L548.0,211.7 L554.0,205.5 L560.0,205.5 L566.0,204.8 L572.0,212.9 L578.0,210.7 L584.0,201.8 L590.0,208.9 L596.0,209.8 L602.0,204.9 L608.0,200.2 L614.0,201.6 L620.0,195.6 L626.0,195.7 L632.0,208.7 L638.0,206.3 L644.0,206.3 L650.0,212.7 L656.0,208.2 L662.0,215.0 L668.0,215.9 L674.0,210.0 L680.0,212.0 L686.0,212.0 L692.0,210.9 L698.0,214.5 L704.0,210.1 L710.0,211.5 L716.0,207.6 L722.0,216.4 L728.0,209.2 L734.0,210.0 L740.0,211.0 L746.0,213.9 L752.0,207.0 L758.0,212.0 L764.0,206.0 L770.0,205.4 L776.0,204.3 L782.0,197.2 L788.0,201.3 L794.0,197.2 L800.0,194.0 L806.2,203.0 L812.5,194.8 L818.8,197.8 L825.0,200.2 L831.2,197.6 L837.5,194.2 L843.8,195.8 L850.0,195.7 L856.2,197.2 L862.5,187.8 L868.8,192.0 L875.0,187.0 L881.2,186.1 L887.5,190.8 L893.8,186.3 L900.0,185.7 L906.4,187.4 L912.9,188.5 L919.3,182.2 L925.7,183.5 L932.1,181.5 L938.6,180.9 L945,180" fill="none" stroke="#4858a0" stroke-width="4"/>
<path d="M85,210 C89.2,205.0 100.8,193.3 110,180 C119.2,166.7 131.7,135.8 140,130 C148.3,124.2 153.3,145.8 160,145 C166.7,144.2 170.0,128.3 180,125 C190.0,121.7 208.3,124.2 220,125 C231.7,125.8 238.3,125.8 250,130 C261.7,134.2 278.3,141.7 290,150 C301.7,158.3 310.0,171.7 320,180 C330.0,188.3 340.0,194.2 350,200 C360.0,205.8 361.7,210.0 380,215 C398.3,220.0 443.3,225.0 460,230 C476.7,235.0 470.0,243.3 480,245 C490.0,246.7 506.7,242.5 520,240 C533.3,237.5 543.3,229.2 560,230 C576.7,230.8 596.7,242.5 620,245 C643.3,247.5 676.7,245.8 700,245 C723.3,244.2 740.0,242.5 760,240 C780.0,237.5 800.0,234.2 820,230 C840.0,225.8 859.2,218.3 880,215 C900.8,211.7 934.2,210.8 945,210" fill="none" stroke="#2fae6a" stroke-width="6"/>
</g></g>
<g transform="translate(610,380) scale(0.31)">
<clipPath id="c3z"><rect x="6" y="28" width="970" height="236"/></clipPath>
<g clip-path="url(#c3z)">
<rect x="6" y="28" width="970" height="236" fill="#1a1e26"/>
<rect x="6" y="28" width="970" height="33" fill="#111318"/>
<rect x="780" y="28" width="105" height="33" fill="#1b2a40"/>
<rect x="50" y="42" width="75" height="7" rx="2" fill="#c9ced6" opacity="0.55"/>
<rect x="195" y="42" width="75" height="7" rx="2" fill="#c9ced6" opacity="0.55"/>
<rect x="305" y="42" width="75" height="7" rx="2" fill="#c9ced6" opacity="0.55"/>
<rect x="415" y="42" width="75" height="7" rx="2" fill="#c9ced6" opacity="0.55"/>
<rect x="530" y="42" width="75" height="7" rx="2" fill="#c9ced6" opacity="0.55"/>
<rect x="675" y="42" width="75" height="7" rx="2" fill="#c9ced6" opacity="0.55"/>
<rect x="785" y="42" width="75" height="7" rx="2" fill="#c9ced6" opacity="0.55"/>
<rect x="160" y="40" width="14" height="9" rx="3" fill="#e6e9ee" opacity="0.85"/>
<rect x="640" y="40" width="14" height="9" rx="3" fill="#e6e9ee" opacity="0.85"/>
<rect x="900" y="40" width="14" height="9" rx="3" fill="#e6e9ee" opacity="0.85"/>
<rect x="20" y="75" width="105" height="41" rx="3" fill="#252a33"/>
<rect x="28" y="100" width="55" height="6" fill="#d4d8de" opacity="0.6"/>
<rect x="20" y="125" width="105" height="35" rx="3" fill="#252a33"/>
<rect x="28" y="150" width="55" height="6" fill="#d4d8de" opacity="0.6"/>
<rect x="20" y="170" width="105" height="40" rx="3" fill="#252a33"/>
<rect x="28" y="195" width="55" height="6" fill="#d4d8de" opacity="0.6"/>
<rect x="20" y="220" width="105" height="35" rx="3" fill="#252a33"/>
<rect x="28" y="245" width="55" height="6" fill="#d4d8de" opacity="0.6"/>
<circle cx="155" cy="101" r="4" fill="#2fae6a"/><rect x="163" y="98" width="50" height="6" fill="#2fae6a" opacity="0.45"/>
<circle cx="227" cy="101" r="4" fill="#8a8f99"/><rect x="235" y="98" width="50" height="6" fill="#8a8f99" opacity="0.45"/>
<circle cx="298" cy="101" r="4" fill="#8a8f99"/><rect x="306" y="98" width="50" height="6" fill="#8a8f99" opacity="0.45"/>
<circle cx="368" cy="101" r="4" fill="#8a8f99"/><rect x="376" y="98" width="50" height="6" fill="#8a8f99" opacity="0.45"/>
<circle cx="435" cy="101" r="4" fill="#8a8f99"/><rect x="443" y="98" width="50" height="6" fill="#8a8f99" opacity="0.45"/>
<circle cx="500" cy="101" r="4" fill="#3d8fd8"/><rect x="508" y="98" width="50" height="6" fill="#3d8fd8" opacity="0.45"/>
<circle cx="575" cy="101" r="4" fill="#3d8fd8"/><rect x="583" y="98" width="130" height="6" fill="#3d8fd8" opacity="0.45"/>
<circle cx="725" cy="101" r="4" fill="#2a6f68"/><rect x="733" y="98" width="130" height="6" fill="#2a6f68" opacity="0.45"/>
<rect x="145" y="68" width="70" height="47" fill="none" stroke="#d42b2b" stroke-width="4"/>
<rect x="487" y="78" width="75" height="37" fill="none" stroke="#d42b2b" stroke-width="4"/>
<rect x="565" y="78" width="150" height="37" fill="none" stroke="#d42b2b" stroke-width="4"/>
<rect x="175" y="120" width="2.5" height="110" fill="#3d8fd8" opacity="0.6"/>
<rect x="182" y="170" width="2.5" height="60" fill="#3d8fd8" opacity="0.6"/>
<rect x="189" y="120" width="2.5" height="110" fill="#3d8fd8" opacity="0.6"/>
<rect x="196" y="120" width="2.5" height="110" fill="#3d8fd8" opacity="0.6"/>
<rect x="203" y="120" width="2.5" height="110" fill="#3d8fd8" opacity="0.6"/>
<rect x="210" y="130" width="2.5" height="100" fill="#3d8fd8" opacity="0.6"/>
<rect x="217" y="225" width="2.5" height="5" fill="#3d8fd8" opacity="0.6"/>
<rect x="224" y="200" width="2.5" height="30" fill="#3d8fd8" opacity="0.6"/>
<rect x="245" y="210" width="2.5" height="20" fill="#3d8fd8" opacity="0.6"/>
<rect x="252" y="200" width="2.5" height="30" fill="#3d8fd8" opacity="0.6"/>
<rect x="259" y="200" width="2.5" height="30" fill="#3d8fd8" opacity="0.6"/>
<rect x="266" y="210" width="2.5" height="20" fill="#3d8fd8" opacity="0.6"/>
<rect x="273" y="170" width="2.5" height="60" fill="#3d8fd8" opacity="0.6"/>
<rect x="280" y="210" width="2.5" height="20" fill="#3d8fd8" opacity="0.6"/>
<rect x="287" y="170" width="2.5" height="60" fill="#3d8fd8" opacity="0.6"/>
<rect x="294" y="215" width="2.5" height="15" fill="#3d8fd8" opacity="0.6"/>
<rect x="329" y="225" width="2.5" height="5" fill="#3d8fd8" opacity="0.6"/>
<rect x="343" y="225" width="2.5" height="5" fill="#3d8fd8" opacity="0.6"/>
<rect x="350" y="210" width="2.5" height="20" fill="#3d8fd8" opacity="0.6"/>
<rect x="357" y="215" width="2.5" height="15" fill="#3d8fd8" opacity="0.6"/>
<rect x="364" y="215" width="2.5" height="15" fill="#3d8fd8" opacity="0.6"/>
<rect x="371" y="215" width="2.5" height="15" fill="#3d8fd8" opacity="0.6"/>
<rect x="378" y="210" width="2.5" height="20" fill="#3d8fd8" opacity="0.6"/>
<rect x="392" y="220" width="2.5" height="10" fill="#3d8fd8" opacity="0.6"/>
<rect x="420" y="210" width="2.5" height="20" fill="#3d8fd8" opacity="0.6"/>
<rect x="434" y="225" width="2.5" height="5" fill="#3d8fd8" opacity="0.6"/>
<rect x="441" y="215" width="2.5" height="15" fill="#3d8fd8" opacity="0.6"/>
<rect x="448" y="225" width="2.5" height="5" fill="#3d8fd8" opacity="0.6"/>
<rect x="455" y="215" width="2.5" height="15" fill="#3d8fd8" opacity="0.6"/>
<rect x="462" y="200" width="2.5" height="30" fill="#3d8fd8" opacity="0.6"/>
<rect x="469" y="215" width="2.5" height="15" fill="#3d8fd8" opacity="0.6"/>
<rect x="476" y="220" width="2.5" height="10" fill="#3d8fd8" opacity="0.6"/>
<rect x="483" y="200" width="2.5" height="30" fill="#3d8fd8" opacity="0.6"/>
<rect x="490" y="215" width="2.5" height="15" fill="#3d8fd8" opacity="0.6"/>
<rect x="504" y="220" width="2.5" height="10" fill="#3d8fd8" opacity="0.6"/>
<rect x="518" y="225" width="2.5" height="5" fill="#3d8fd8" opacity="0.6"/>
<rect x="532" y="220" width="2.5" height="10" fill="#3d8fd8" opacity="0.6"/>
<rect x="539" y="200" width="2.5" height="30" fill="#3d8fd8" opacity="0.6"/>
<rect x="560" y="225" width="2.5" height="5" fill="#3d8fd8" opacity="0.6"/>
<rect x="567" y="225" width="2.5" height="5" fill="#3d8fd8" opacity="0.6"/>
<rect x="588" y="210" width="2.5" height="20" fill="#3d8fd8" opacity="0.6"/>
<rect x="595" y="210" width="2.5" height="20" fill="#3d8fd8" opacity="0.6"/>
<rect x="609" y="220" width="2.5" height="10" fill="#3d8fd8" opacity="0.6"/>
<rect x="623" y="215" width="2.5" height="15" fill="#3d8fd8" opacity="0.6"/>
<rect x="644" y="225" width="2.5" height="5" fill="#3d8fd8" opacity="0.6"/>
<rect x="651" y="215" width="2.5" height="15" fill="#3d8fd8" opacity="0.6"/>
<rect x="658" y="215" width="2.5" height="15" fill="#3d8fd8" opacity="0.6"/>
<rect x="686" y="190" width="2.5" height="40" fill="#3d8fd8" opacity="0.6"/>
<rect x="693" y="190" width="2.5" height="40" fill="#3d8fd8" opacity="0.6"/>
<rect x="700" y="210" width="2.5" height="20" fill="#3d8fd8" opacity="0.6"/>
<rect x="707" y="190" width="2.5" height="40" fill="#3d8fd8" opacity="0.6"/>
<rect x="714" y="220" width="2.5" height="10" fill="#3d8fd8" opacity="0.6"/>
<rect x="728" y="200" width="2.5" height="30" fill="#3d8fd8" opacity="0.6"/>
<rect x="749" y="215" width="2.5" height="15" fill="#3d8fd8" opacity="0.6"/>
<rect x="756" y="225" width="2.5" height="5" fill="#3d8fd8" opacity="0.6"/>
<rect x="763" y="225" width="2.5" height="5" fill="#3d8fd8" opacity="0.6"/>
<rect x="784" y="220" width="2.5" height="10" fill="#3d8fd8" opacity="0.6"/>
<rect x="791" y="220" width="2.5" height="10" fill="#3d8fd8" opacity="0.6"/>
<rect x="798" y="220" width="2.5" height="10" fill="#3d8fd8" opacity="0.6"/>
<rect x="812" y="215" width="2.5" height="15" fill="#3d8fd8" opacity="0.6"/>
<rect x="819" y="215" width="2.5" height="15" fill="#3d8fd8" opacity="0.6"/>
<rect x="826" y="210" width="2.5" height="20" fill="#3d8fd8" opacity="0.6"/>
<rect x="833" y="200" width="2.5" height="30" fill="#3d8fd8" opacity="0.6"/>
<rect x="840" y="210" width="2.5" height="20" fill="#3d8fd8" opacity="0.6"/>
<rect x="847" y="180" width="2.5" height="50" fill="#3d8fd8" opacity="0.6"/>
<rect x="854" y="200" width="2.5" height="30" fill="#3d8fd8" opacity="0.6"/>
<rect x="861" y="160" width="2.5" height="70" fill="#3d8fd8" opacity="0.6"/>
<rect x="868" y="180" width="2.5" height="50" fill="#3d8fd8" opacity="0.6"/>
<rect x="875" y="180" width="2.5" height="50" fill="#3d8fd8" opacity="0.6"/>
<rect x="882" y="160" width="2.5" height="70" fill="#3d8fd8" opacity="0.6"/>
<rect x="889" y="210" width="2.5" height="20" fill="#3d8fd8" opacity="0.6"/>
<rect x="896" y="200" width="2.5" height="30" fill="#3d8fd8" opacity="0.6"/>
<rect x="903" y="180" width="2.5" height="50" fill="#3d8fd8" opacity="0.6"/>
<path d="M180,140 C183.3,145.0 191.7,161.7 200,170 C208.3,178.3 218.3,187.5 230,190 C241.7,192.5 253.3,185.8 270,185 C286.7,184.2 311.7,184.2 330,185 C348.3,185.8 365.0,187.5 380,190 C395.0,192.5 406.7,199.2 420,200 C433.3,200.8 446.7,198.3 460,195 C473.3,191.7 488.3,180.8 500,180 C511.7,179.2 516.7,185.0 530,190 C543.3,195.0 561.7,205.8 580,210 C598.3,214.2 620.0,214.2 640,215 C660.0,215.8 680.0,215.0 700,215 C720.0,215.0 740.0,217.5 760,215 C780.0,212.5 800.0,205.0 820,200 C840.0,195.0 866.7,188.3 880,185 C893.3,181.7 896.7,180.8 900,180" fill="none" stroke="#3aa0c8" stroke-width="5"/>
<path d="M180,180 C183.3,175.0 191.7,158.3 200,150 C208.3,141.7 218.3,135.0 230,130 C241.7,125.0 253.3,120.8 270,120 C286.7,119.2 315.0,121.7 330,125 C345.0,128.3 351.7,130.8 360,140 C368.3,149.2 370.0,171.7 380,180 C390.0,188.3 406.7,187.5 420,190 C433.3,192.5 446.7,195.8 460,195 C473.3,194.2 486.7,184.2 500,185 C513.3,185.8 528.3,196.7 540,200 C551.7,203.3 556.7,203.3 570,205 C583.3,206.7 605.0,210.0 620,210 C635.0,210.0 646.7,206.7 660,205 C673.3,203.3 686.7,198.3 700,200 C713.3,201.7 726.7,214.2 740,215 C753.3,215.8 763.3,208.3 780,205 C796.7,201.7 820.0,199.2 840,195 C860.0,190.8 890.0,182.5 900,180" fill="none" stroke="#2e9a62" stroke-width="6"/>
<rect x="160" y="236" width="22" height="6" fill="#b5bac4" opacity="0.45"/>
<rect x="215" y="236" width="22" height="6" fill="#b5bac4" opacity="0.45"/>
<rect x="270" y="236" width="22" height="6" fill="#b5bac4" opacity="0.45"/>
<rect x="325" y="236" width="22" height="6" fill="#b5bac4" opacity="0.45"/>
<rect x="380" y="236" width="22" height="6" fill="#b5bac4" opacity="0.45"/>
<rect x="435" y="236" width="22" height="6" fill="#b5bac4" opacity="0.45"/>
<rect x="490" y="236" width="22" height="6" fill="#b5bac4" opacity="0.45"/>
<rect x="545" y="236" width="22" height="6" fill="#b5bac4" opacity="0.45"/>
<rect x="600" y="236" width="22" height="6" fill="#b5bac4" opacity="0.45"/>
<rect x="655" y="236" width="22" height="6" fill="#b5bac4" opacity="0.45"/>
<rect x="710" y="236" width="22" height="6" fill="#b5bac4" opacity="0.45"/>
<rect x="765" y="236" width="22" height="6" fill="#b5bac4" opacity="0.45"/>
<rect x="820" y="236" width="22" height="6" fill="#b5bac4" opacity="0.45"/>
<rect x="875" y="236" width="22" height="6" fill="#b5bac4" opacity="0.45"/>
<rect x="170" y="254" width="770" height="5" fill="#5a5f68"/>
<rect x="935" y="70" width="6" height="185" fill="#3a3f48"/>
<rect x="968" y="75" width="5" height="190" fill="#5a5f68"/>
</g></g>
<path d="M983.5 259.5 L990.5 267.5 L987.5 268 L988.5 271 L986.5 271.5 L985.5 268.5 L983.5 270 Z" fill="#fff" stroke="#777" stroke-width="0.6" opacity="0.9"/>
</svg>
<div class="a ser" style="left:401.5px;top:188.7px;font-family:'Liberation Serif',serif;font-size:9.5px;line-height:11px;color:#333;">12</div>
<div class="a ser" style="left:497px;top:194.0px;font-family:'Liberation Serif',serif;font-size:13.6px;line-height:16px;font-weight:bold;color:#262626;">МУЛЬТИСПЕКТРАЛЬНЫЕ ДАННЫЕ ДИСТАНЦИОННОГО</div>
<div class="a ser" style="left:447px;top:211.5px;font-family:'Liberation Serif',serif;font-size:13.6px;line-height:16px;font-weight:bold;color:#262626;">ЗОНДИРОВАНИЯ ЗЕМЛИ ДЛЯ ОЦЕНКИ ВЕГЕТАЦИОННЫХ ПРОЦЕССОВ</div>
<div class="a ser" style="left:600.5px;top:228.2px;font-family:'Liberation Serif',serif;font-size:13.6px;line-height:16px;font-weight:bold;color:#262626;">В СЕЛЬСКОМ ХОЗЯЙСТВЕ</div>
<div class="a ser" style="left:399px;top:280.5px;font-family:'Liberation Serif',serif;font-size:11.7px;line-height:14px;color:#222;">Индекс NDVI характеризует плотность</div>
<div class="a ser" style="left:399px;top:294.4px;font-family:'Liberation Serif',serif;font-size:11.7px;line-height:14px;color:#222;">растительности и позволяет</div>
<div class="a ser" style="left:399px;top:308.3px;font-family:'Liberation Serif',serif;font-size:11.7px;line-height:14px;color:#222;">землевладельцам оценить всхожесть,</div>
<div class="a ser" style="left:399px;top:322.2px;font-family:'Liberation Serif',serif;font-size:11.7px;line-height:14px;color:#222;">рост, наличие болезней, а также</div>
<div class="a ser" style="left:399px;top:336.1px;font-family:'Liberation Serif',serif;font-size:11.7px;line-height:14px;color:#222;">спрогнозировать продуктивность</div>
<div class="a ser" style="left:399px;top:350.0px;font-family:'Liberation Serif',serif;font-size:11.7px;line-height:14px;color:#222;">полей.</div>
<div class="a" style="left:386px;top:400px;width:224.5px;height:62.7px;background:linear-gradient(100deg,#bcd2ee 0%,#d9e6f6 40%,#e3edf9 60%,#d2e1f4 100%)"></div>
<div class="a ser" style="left:198px;width:600px;text-align:center;top:403.5px;font-family:'Liberation Serif',serif;font-size:11.7px;line-height:14px;color:#262626">Рис. 9. Аналитический график на основе</div>
<div class="a ser" style="left:198px;width:600px;text-align:center;top:417.2px;font-family:'Liberation Serif',serif;font-size:11.7px;line-height:14px;color:#262626">индекса NDVI и данных о влажности за</div>
<div class="a ser" style="left:198px;width:600px;text-align:center;top:431.3px;font-family:'Liberation Serif',serif;font-size:11.7px;line-height:14px;color:#262626">2020-2021 гг, космоснимок «EOS Crop</div>
<div class="a ser" style="left:198px;width:600px;text-align:center;top:445.0px;font-family:'Liberation Serif',serif;font-size:11.7px;line-height:14px;color:#262626">Monitoring», 2021 г.</div>
<div class="a" style="left:389px;top:559.5px;width:296px;height:34.2px;background:linear-gradient(100deg,#c2d7f1 0%,#dbe7f7 35%,#e6eef9 60%,#d5e3f5 100%)"></div>
<div class="a ser" style="left:237px;width:600px;text-align:center;top:563.8px;font-family:'Liberation Serif',serif;font-size:11.7px;line-height:14px;color:#262626">Рис. 10. Аналитический график на основе индекса</div>
<div class="a ser" style="left:237px;width:600px;text-align:center;top:577.6px;font-family:'Liberation Serif',serif;font-size:11.7px;line-height:14px;color:#262626">NDVI с 2018 по 2021 гг</div>
<div class="a" style="left:689px;top:560px;width:299.6px;height:33.6px;background:linear-gradient(100deg,#cfdff4 0%,#dbe7f7 50%,#d3e2f5 100%)"></div>
<div class="a ser" style="left:538px;width:600px;text-align:center;top:563.8px;font-family:'Liberation Serif',serif;font-size:11.7px;line-height:14px;color:#262626">Рис. 11. Аналитический график на основе индекса NDVI</div>
<div class="a ser" style="left:538px;width:600px;text-align:center;top:577.6px;font-family:'Liberation Serif',serif;font-size:11.7px;line-height:14px;color:#262626">и данных о температуре воздуха за исследуемый период</div>
<div class="a" style="left:386px;top:597px;width:186.8px;height:14.2px;background:#d8a55a"></div>
<div class="a" style="left:572.8px;top:597px;width:215.8px;height:14.2px;background:#127a3a"></div>
<div class="a" style="left:572.8px;top:597px;width:415.8px;height:14.2px;background:#127a3a"></div>
<div class="a" style="left:426px;top:595px;font-size:18px;line-height:18px;letter-spacing:0.4px;color:#1c1510;-webkit-text-stroke:0.4px #1c1510">www.bsu.edu.ru</div>
<div class="a" style="left:579.5px;top:597.5px;font-size:10.1px;line-height:12px;color:#cdf4d2">Белгородский государственный национальный исследовательский университет</div>
<svg class="a" style="left:905px;top:180px" width="75" height="32" viewBox="0 0 75 32">
 <path d="M5 5.6 H19.8 V21 C19.8 24.5 16 26.5 12.4 27.8 C8.8 26.5 5 24.5 5 21 Z" fill="#3f9f49"/>
 <rect x="7" y="7.3" width="10.5" height="1.8" fill="#a9dba8" opacity="0.7"/>
 <path d="M9 20 C10 15 15 15 16 20 M12.4 13 V22" stroke="#b8e0b2" stroke-width="1.2" fill="none" opacity="0.5"/>
 <text x="23.4" y="17.2" font-family="Liberation Serif" font-size="16.5" font-weight="bold" fill="#3d7058" textLength="21.6" lengthAdjust="spacingAndGlyphs">Бел</text>
 <text x="45" y="17.2" font-family="Liberation Serif" font-size="17" font-weight="bold" fill="#3d7058" textLength="23" lengthAdjust="spacingAndGlyphs">ГУ</text>
 <text x="33.6" y="9.3" font-family="Liberation Serif" font-size="5" fill="#5a8a72" textLength="11.5" lengthAdjust="spacingAndGlyphs">НИУ</text>
 <text x="23.4" y="23.8" font-family="Liberation Serif" font-size="5" fill="#6f7d77" textLength="44" lengthAdjust="spacingAndGlyphs">BELGOROD STATE</text>
 <text x="23.4" y="28.6" font-family="Liberation Serif" font-size="5" fill="#6f7d77" textLength="44" lengthAdjust="spacingAndGlyphs">UNIVERSITY (BelSU)</text>
</svg>
<!-- bottom toolbar -->
<div class="a" style="left:586px;top:634px;width:29px;height:29px;border-radius:50%;border:2px solid #fff"></div>
<svg class="a" style="left:586px;top:634px" width="29" height="29" viewBox="0 0 29 29">
 <rect x="12" y="8.5" width="5" height="8" rx="2.5" fill="none" stroke="#fff" stroke-width="1.2"/>
 <path d="M10 14 C10 19 19 19 19 14" fill="none" stroke="#fff" stroke-width="1.2"/>
 <path d="M14.5 18.5 V20.5 M11.5 20.5 H17.5" stroke="#fff" stroke-width="1.2"/>
 <path d="M9.5 20 L19.5 8.5" stroke="#06172a" stroke-width="2.4"/>
 <path d="M9.5 20 L19.5 8.5" stroke="#fff" stroke-width="1.2"/>
</svg>
<div class="a" style="left:629px;top:634px;width:29.5px;height:29.5px;border-radius:50%;background:#1e72d8"></div>
<svg class="a" style="left:629px;top:634px" width="30" height="30" viewBox="0 0 30 30">
 <path d="M9 12.5 H11.5 L15.5 9 V21 L11.5 17.5 H9 Z" fill="none" stroke="#fff" stroke-width="1.2" stroke-linejoin="round"/>
 <path d="M17.5 12.5 C18.5 13.8 18.5 16.2 17.5 17.5" fill="none" stroke="#fff" stroke-width="1.2"/>
 <path d="M19.5 10.8 C21.2 13 21.2 17 19.5 19.2" fill="none" stroke="#fff" stroke-width="1.2"/>
</svg>
<div class="a" style="left:649px;top:651.5px;width:13px;height:13px;border-radius:50%;background:#fff;border:1.5px solid #06172a"></div>
<svg class="a" style="left:649px;top:651.5px" width="13" height="13" viewBox="0 0 13 13"><path d="M4.2 5.6 L6.5 7.8 L8.8 5.6" fill="none" stroke="#888" stroke-width="1"/></svg>
<div class="a" style="left:673px;top:634px;width:29px;height:29px;border-radius:50%;border:2px solid #fff"></div>
<svg class="a" style="left:673px;top:634px" width="29" height="29" viewBox="0 0 29 29">
 <rect x="8" y="10.5" width="9.5" height="8" fill="none" stroke="#fff" stroke-width="1.2"/>
 <path d="M17.5 13 L21 11 V18 L17.5 16" fill="none" stroke="#fff" stroke-width="1.2"/>
 <path d="M8.5 20.5 L19 8.5" stroke="#06172a" stroke-width="2.4"/>
 <path d="M8.5 20.5 L19 8.5" stroke="#fff" stroke-width="1.2"/>
</svg>

</body></html>
